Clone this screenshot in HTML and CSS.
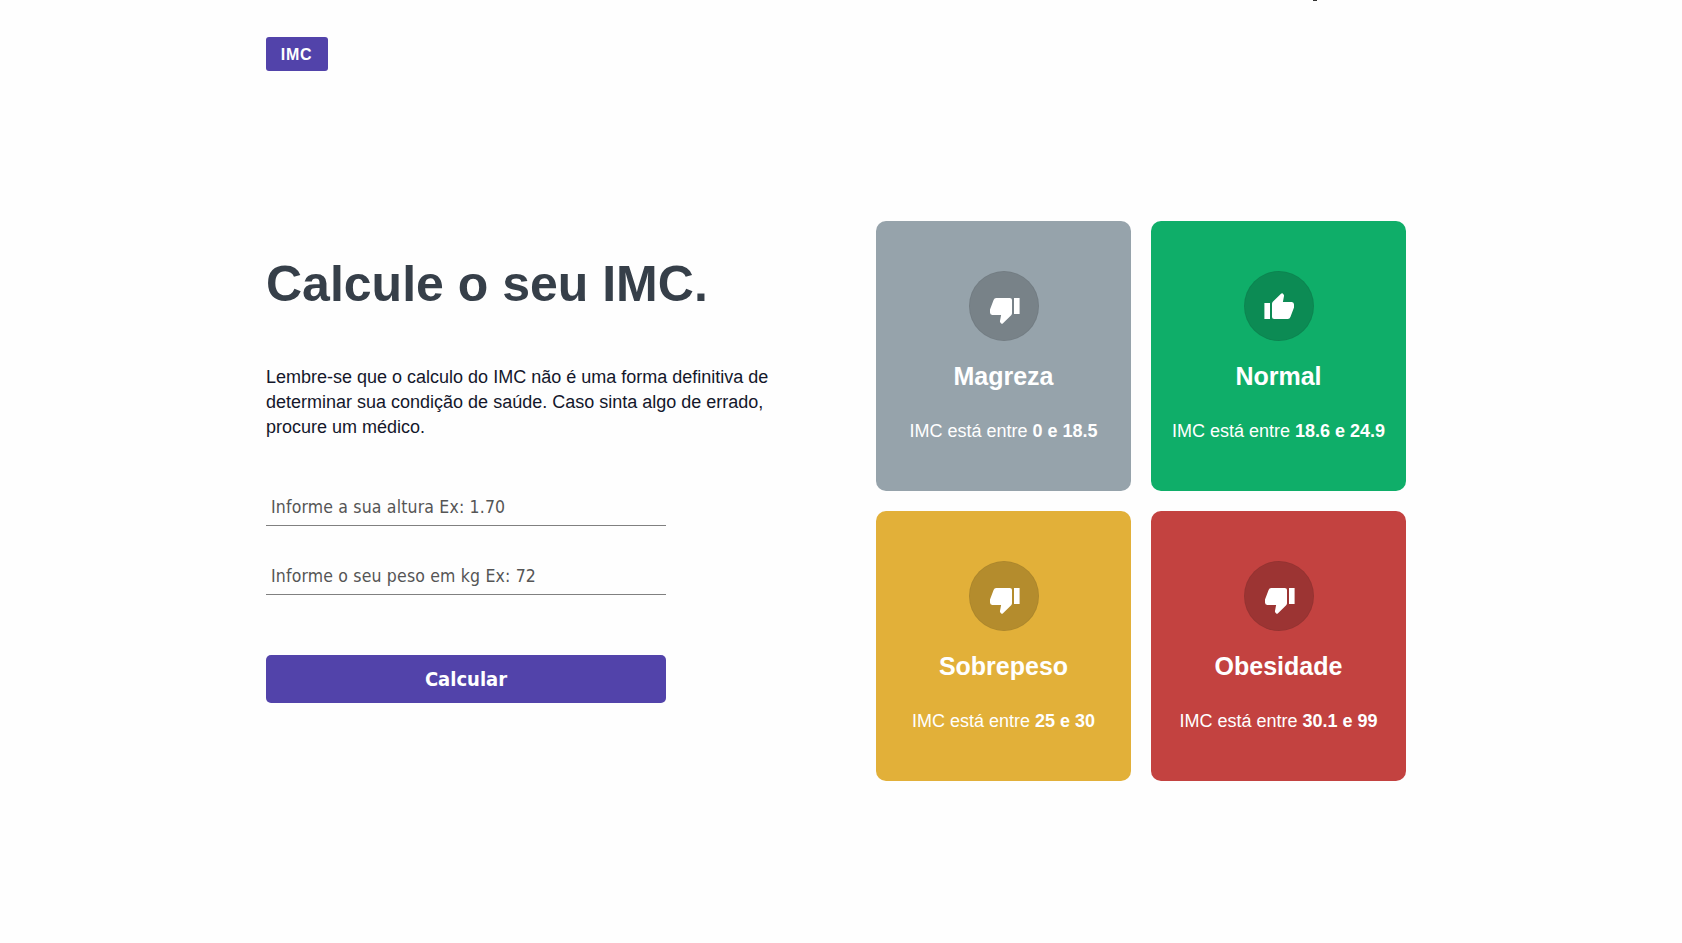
FILE: index.html
```html
<!DOCTYPE html>
<html lang="pt-BR">
<head>
<meta charset="utf-8">
<title>Calculadora de IMC</title>
<link rel="stylesheet" href="styles.css">
</head>
<body>
<svg class="defs" width="0" height="0">
  <symbol id="thumb" viewBox="0 0 30 26">
    <path d="M0.4 10H6V26H0.4Z"/>
    <path d="M8 10.8Q8 9.6 8.8 8.8L17 0.8Q17.9 -.1 18.8 .6L19.4 1.2Q20.2 2 20 3L18.9 9H27.8Q30 9.2 30 11.4V14.4L26.4 24Q25.7 26 23.8 26H10.2Q8 26 8 24Z"/>
  </symbol>
</svg>
<span class="edge-mark"></span>
<div class="container">
  <header class="header"><span class="logo">IMC</span></header>
  <main class="main">
    <section class="left">
      <h1>Calcule o seu IMC.</h1>
      <p class="intro">Lembre-se que o calculo do IMC não é uma forma definitiva de determinar sua condição de saúde. Caso sinta algo de errado, procure um médico.</p>
      <input class="field height" type="text" placeholder="Informe a sua altura Ex: 1.70">
      <input class="field weight" type="text" placeholder="Informe o seu peso em kg Ex: 72">
      <button class="calculate">Calcular</button>
    </section>
    <section class="grid">
      <article class="card thin">
        <div class="circle"><svg class="icon down"><use href="#thumb"/></svg></div>
        <h2>Magreza</h2><p>IMC está entre <strong>0 e 18.5</strong></p>
      </article>
      <article class="card normal">
        <div class="circle"><svg class="icon"><use href="#thumb"/></svg></div>
        <h2>Normal</h2><p>IMC está entre <strong>18.6 e 24.9</strong></p>
      </article>
      <article class="card over">
        <div class="circle"><svg class="icon down"><use href="#thumb"/></svg></div>
        <h2>Sobrepeso</h2><p>IMC está entre <strong>25 e 30</strong></p>
      </article>
      <article class="card obese">
        <div class="circle"><svg class="icon down"><use href="#thumb"/></svg></div>
        <h2>Obesidade</h2><p>IMC está entre <strong>30.1 e 99</strong></p>
      </article>
    </section>
  </main>
</div>
</body>
</html>
```
FILE: styles.css
```css
* { box-sizing: border-box; margin: 0; padding: 0; }
body { background: #fefefe; color: #14172b; font-family: "Liberation Sans", Arial, sans-serif; }
.defs { position: absolute; }
.edge-mark { position: absolute; top: 0; left: 1313px; width: 4px; height: 1px; background: #333; }
.container { width: 1140px; margin-left: 266px; }
.header { height: 221px; padding-top: 37px; }
.logo { display: flex; justify-content: center; width: 62px; height: 34px; padding-right: 1px; border-radius: 3px; background: #5243aa; color: #fff; font-size: 16px; line-height: 35px; font-weight: bold; letter-spacing: .7px; }
.main { display: flex; justify-content: space-between; }
.left { width: 520px; padding-top: 35px; }
h1 { font-size: 50px; line-height: 56px; color: #363f49; margin-bottom: 53px; }
.intro { font-size: 18px; line-height: 25px; }
.field { display: block; width: 400px; height: 40px; padding: 2px 5px 0; border: 0; border-bottom: 1px solid #808080; background: transparent; font-family: "DejaVu Sans Condensed", "Noto Sans", sans-serif; font-size: 17.5px; letter-spacing: .17px; outline: none; }
.field::placeholder { color: #555; opacity: 1; }
.height { margin-top: 46px; }
.weight { margin-top: 29px; }
.calculate { display: block; width: 400px; height: 48px; margin-top: 60px; border: 0; border-radius: 5px; background: #5243aa; color: #fff; font-family: "DejaVu Sans Condensed", "Noto Sans", sans-serif; font-size: 20px; font-weight: bold; }
.grid { display: grid; grid-template-columns: 255px 255px; grid-auto-rows: 270px; gap: 20px; }
.card { display: flex; flex-direction: column; align-items: center; padding-top: 50px; border-radius: 10px; color: #fff; }
.thin { background: #96a3ab; }
.normal { background: #0fae69; }
.over { background: #e2b039; }
.obese { background: #c34240; }
.circle { display: flex; justify-content: center; width: 70px; height: 70px; padding-top: 21px; margin-left: 1px; border-radius: 50%; background: rgba(0,0,0,.2); border: 1px solid rgba(0,0,0,.05); }
.icon { width: 30px; height: 26px; fill: #fff; }
.down { transform: rotate(180deg); margin-top: 5px; margin-left: 1px; }
.card h2 { font-size: 25px; line-height: 30px; margin-top: 20px; }
.card p { font-size: 18px; line-height: 24px; margin-top: 28px; white-space: nowrap; }
```
